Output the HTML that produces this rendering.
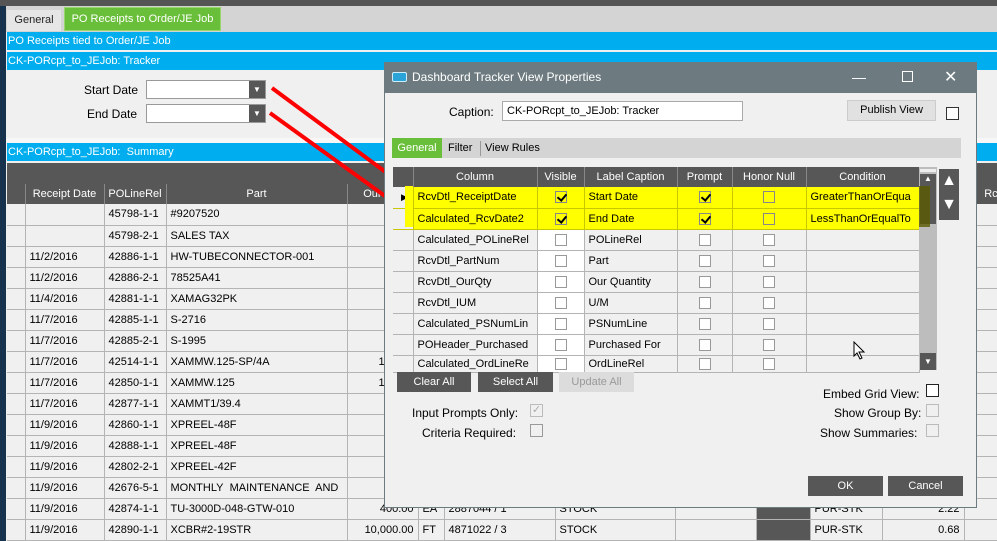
<!DOCTYPE html>
<html><head><meta charset="utf-8"><style>
*{margin:0;padding:0;box-sizing:border-box}
body{width:997px;height:541px;overflow:hidden;background:#f0f0f0;font-family:"Liberation Sans",Arial,sans-serif;font-size:11px;color:#000;position:relative}
.a{position:absolute}
.bar{position:absolute;left:7px;right:0;height:18px;background:#00aeef;color:#fff;font-size:11px;line-height:18px;padding-left:1px}
.bg td{border-right:1px solid #b4b4b4;border-bottom:1px solid #b4b4b4;height:21px;padding:0 4px;white-space:nowrap;overflow:hidden;font-size:11px}
table{border-collapse:collapse;table-layout:fixed}
.dg td{border-right:1px solid #b4b4b4;border-bottom:1px solid #b4b4b4;height:21px;padding:0 4px;white-space:nowrap;overflow:hidden;font-size:11px;background:#f0f0f0}
.dg td.w{background:#fff}
.dg tr.y td{background:#ffff00;border-color:#c8c800}
.dg tr.y td.s{background:#f0f0f0}
.dg th,.bg th{background:#575757;color:#fff;font-weight:normal;border-right:1px solid #888;height:20px;font-size:11px}
.cb{display:inline-block;width:12px;height:12px;border:1px solid #999;background:#fff;vertical-align:middle;position:relative}
.y .cb{background:#ffff00;border-color:#888}
.ck::after{content:"";position:absolute;left:3px;top:0px;width:4px;height:7px;border:solid #000;border-width:0 2px 2px 0;transform:rotate(40deg)}
.c{text-align:center}
.btn{position:absolute;background:#575757;color:#fff;text-align:center;line-height:20px;height:20px}
</style></head><body>
<div class="a" style="left:0;top:0;width:997px;height:6px;background:#555"></div>
<div class="a" style="left:0;top:6px;width:6px;height:535px;background:#16324d"></div>
<div class="a" style="left:6px;top:6px;width:991px;height:26px;background:#d4d4d4"></div>
<div class="a" style="left:7px;top:10px;width:54px;height:21px;line-height:21px;text-align:center;background:#e6e6e6;color:#222">General</div>
<div class="a" style="left:64px;top:7px;width:157px;height:24px;line-height:22px;text-align:center;background:#6abf3a;color:#fff;border:1px solid #9ad66e">PO Receipts to Order/JE Job</div>
<div class="bar" style="top:32px">PO Receipts tied to Order/JE Job</div>
<div class="bar" style="top:52px">CK-PORcpt_to_JEJob: Tracker</div>
<div class="a" style="left:84px;top:83px;font-size:12px">Start Date</div>
<div class="a" style="left:87px;top:107px;font-size:12px">End Date</div>
<div class="a" style="left:146px;top:80px;width:120px;height:19px;background:#fff;border:1px solid #999"></div>
<div class="a" style="left:249px;top:81px;width:16px;height:17px;background:#575757;color:#fff;font-size:8px;text-align:center;line-height:17px">▼</div>
<div class="a" style="left:146px;top:104px;width:120px;height:19px;background:#fff;border:1px solid #999"></div>
<div class="a" style="left:249px;top:105px;width:16px;height:17px;background:#575757;color:#fff;font-size:8px;text-align:center;line-height:17px">▼</div>
<div class="a" style="left:6px;top:138px;width:991px;height:5px;background:#f7f7f7"></div>
<div class="bar" style="top:143px">CK-PORcpt_to_JEJob:&nbsp; Summary</div>
<div class="a" style="left:7px;top:163px;width:990px;height:21px;background:#575757"></div>
<table class="bg a" style="left:7px;top:184px;width:1000px">
<colgroup><col style="width:18px"><col style="width:79px"><col style="width:62px"><col style="width:181px"><col style="width:71px"><col style="width:26px"><col style="width:111px"><col style="width:120px"><col style="width:81px"><col style="width:54px"><col style="width:72px"><col style="width:82px"><col style="width:63px"></colgroup>
<tr><th></th><th>Receipt Date</th><th>POLineRel</th><th>Part</th><th>Our Qty</th><th>U/M</th><th>PS</th><th></th><th></th><th></th><th></th><th></th><th>Rcpt</th></tr>
<tr><td></td><td></td><td>45798-1-1</td><td>#9207520</td><td></td><td></td><td></td><td></td><td></td><td style="background:#575757"></td><td></td><td></td><td></td></tr>
<tr><td></td><td></td><td>45798-2-1</td><td>SALES TAX</td><td></td><td></td><td></td><td></td><td></td><td style="background:#575757"></td><td></td><td></td><td></td></tr>
<tr><td></td><td>11/2/2016</td><td>42886-1-1</td><td>HW-TUBECONNECTOR-001</td><td></td><td></td><td></td><td></td><td></td><td style="background:#575757"></td><td></td><td></td><td></td></tr>
<tr><td></td><td>11/2/2016</td><td>42886-2-1</td><td>78525A41</td><td></td><td></td><td></td><td></td><td></td><td style="background:#575757"></td><td></td><td></td><td></td></tr>
<tr><td></td><td>11/4/2016</td><td>42881-1-1</td><td>XAMAG32PK</td><td></td><td></td><td></td><td></td><td></td><td style="background:#575757"></td><td></td><td></td><td></td></tr>
<tr><td></td><td>11/7/2016</td><td>42885-1-1</td><td>S-2716</td><td></td><td></td><td></td><td></td><td></td><td style="background:#575757"></td><td></td><td></td><td></td></tr>
<tr><td></td><td>11/7/2016</td><td>42885-2-1</td><td>S-1995</td><td></td><td></td><td></td><td></td><td></td><td style="background:#575757"></td><td></td><td></td><td></td></tr>
<tr><td></td><td>11/7/2016</td><td>42514-1-1</td><td>XAMMW.125-SP/4A</td><td style="text-align:right;padding-left:31px">1,000.00</td><td></td><td></td><td></td><td></td><td style="background:#575757"></td><td></td><td></td><td></td></tr>
<tr><td></td><td>11/7/2016</td><td>42850-1-1</td><td>XAMMW.125</td><td style="text-align:right;padding-left:31px">1,600.00</td><td></td><td></td><td></td><td></td><td style="background:#575757"></td><td></td><td></td><td></td></tr>
<tr><td></td><td>11/7/2016</td><td>42877-1-1</td><td>XAMMT1/39.4</td><td></td><td></td><td></td><td></td><td></td><td style="background:#575757"></td><td></td><td></td><td></td></tr>
<tr><td></td><td>11/9/2016</td><td>42860-1-1</td><td>XPREEL-48F</td><td></td><td></td><td></td><td></td><td></td><td style="background:#575757"></td><td></td><td></td><td></td></tr>
<tr><td></td><td>11/9/2016</td><td>42888-1-1</td><td>XPREEL-48F</td><td></td><td></td><td></td><td></td><td></td><td style="background:#575757"></td><td></td><td></td><td></td></tr>
<tr><td></td><td>11/9/2016</td><td>42802-2-1</td><td>XPREEL-42F</td><td></td><td></td><td></td><td></td><td></td><td style="background:#575757"></td><td></td><td></td><td></td></tr>
<tr><td></td><td>11/9/2016</td><td>42676-5-1</td><td>MONTHLY&nbsp; MAINTENANCE&nbsp; AND</td><td></td><td></td><td></td><td></td><td></td><td style="background:#575757"></td><td></td><td></td><td></td></tr>
<tr><td></td><td>11/9/2016</td><td>42874-1-1</td><td>TU-3000D-048-GTW-010</td><td style="text-align:right">400.00</td><td>EA</td><td>2887044 / 1</td><td>STOCK</td><td></td><td style="background:#575757"></td><td>PUR-STK</td><td style="text-align:right">2.22</td><td></td></tr>
<tr><td></td><td>11/9/2016</td><td>42890-1-1</td><td>XCBR#2-19STR</td><td style="text-align:right">10,000.00</td><td>FT</td><td>4871022 / 3</td><td>STOCK</td><td></td><td style="background:#575757"></td><td>PUR-STK</td><td style="text-align:right">0.68</td><td></td></tr>
</table>
<svg class="a" style="left:0;top:0" width="997" height="541"><line x1="272" y1="88" x2="418" y2="196" stroke="#f00" stroke-width="4"/><line x1="270" y1="113" x2="414" y2="217" stroke="#f00" stroke-width="4"/></svg>
<div class="a" style="left:384px;top:62px;width:593px;height:446px;background:#f0f0f0;border:1px solid #6d7b80">
<div class="a" style="left:0;top:0;width:591px;height:30px;background:#6d7b80;color:#fff;font-size:12px;line-height:29px;padding-left:27px">Dashboard Tracker View Properties</div>
<div class="a" style="left:7px;top:9px;width:15px;height:10px;background:#2aa3d8;border:1px solid #cfeefc;border-radius:2px"></div>
<div class="a" style="left:467px;top:6px;color:#fff;font-size:14px">—</div>
<div class="a" style="left:517px;top:8px;width:11px;height:11px;border:1px solid #fff"></div>
<div class="a" style="left:559px;top:4px;color:#fff;font-size:16px">✕</div>
<div class="a" style="left:64px;top:42px;font-size:12px">Caption:</div>
<div class="a" style="left:117px;top:38px;width:241px;height:20px;background:#fff;border:1px solid #aaa;padding:3px 4px">CK-PORcpt_to_JEJob: Tracker</div>
<div class="a" style="left:462px;top:37px;width:89px;height:21px;background:#e1e1e1;border:1px solid #ccc;text-align:center;line-height:19px">Publish View</div>
<div class="a" style="left:561px;top:44px;width:13px;height:13px;border:1px solid #333;background:#fff"></div>
<div class="a" style="left:7px;top:75px;width:569px;height:20px;background:#d4d4d4"></div>
<div class="a" style="left:7px;top:75px;width:50px;height:20px;background:#6abf3a;color:#fff;line-height:20px;text-align:center">General</div>
<div class="a" style="left:63px;top:75px;line-height:20px">Filter</div>
<div class="a" style="left:95px;top:78px;width:1px;height:15px;background:#999"></div>
<div class="a" style="left:100px;top:75px;line-height:20px">View Rules</div>
<table class="dg a" style="left:8px;top:104px;width:526px">
<colgroup><col style="width:20px"><col style="width:124px"><col style="width:47px"><col style="width:93px"><col style="width:55px"><col style="width:74px"><col style="width:113px"></colgroup>
<tr><th></th><th>Column</th><th>Visible</th><th>Label Caption</th><th>Prompt</th><th>Honor Null</th><th>Condition</th></tr>
<tr class="y"><td class="s" style="font-size:9px;padding:0 0 0 8px">▶</td><td>RcvDtl_ReceiptDate</td><td class="c"><span class="cb ck"></span></td><td>Start Date</td><td class="c"><span class="cb ck"></span></td><td class="c"><span class="cb"></span></td><td>GreaterThanOrEqua</td></tr>
<tr class="y"><td class="s"></td><td>Calculated_RcvDate2</td><td class="c"><span class="cb ck"></span></td><td>End Date</td><td class="c"><span class="cb ck"></span></td><td class="c"><span class="cb"></span></td><td>LessThanOrEqualTo</td></tr>
<tr><td></td><td>Calculated_POLineRel</td><td class="c w"><span class="cb"></span></td><td>POLineRel</td><td class="c"><span class="cb"></span></td><td class="c"><span class="cb"></span></td><td></td></tr>
<tr><td></td><td>RcvDtl_PartNum</td><td class="c w"><span class="cb"></span></td><td>Part</td><td class="c"><span class="cb"></span></td><td class="c"><span class="cb"></span></td><td></td></tr>
<tr><td></td><td>RcvDtl_OurQty</td><td class="c w"><span class="cb"></span></td><td>Our Quantity</td><td class="c"><span class="cb"></span></td><td class="c"><span class="cb"></span></td><td></td></tr>
<tr><td></td><td>RcvDtl_IUM</td><td class="c w"><span class="cb"></span></td><td>U/M</td><td class="c"><span class="cb"></span></td><td class="c"><span class="cb"></span></td><td></td></tr>
<tr><td></td><td>Calculated_PSNumLin</td><td class="c w"><span class="cb"></span></td><td>PSNumLine</td><td class="c"><span class="cb"></span></td><td class="c"><span class="cb"></span></td><td></td></tr>
<tr><td></td><td>POHeader_Purchased</td><td class="c w"><span class="cb"></span></td><td>Purchased For</td><td class="c"><span class="cb"></span></td><td class="c"><span class="cb"></span></td><td></td></tr>
<tr><td style="height:17px"></td><td style="height:17px">Calculated_OrdLineRe</td><td class="c w" style="height:17px"><span class="cb"></span></td><td style="height:17px">OrdLineRel</td><td class="c" style="height:17px"><span class="cb"></span></td><td class="c" style="height:17px"><span class="cb"></span></td><td style="height:17px"></td></tr>
</table>
<div class="a" style="left:534px;top:104px;width:18px;height:203px;background:#bdbdbd"></div>
<div class="a" style="left:535px;top:106px;width:16px;height:3px;background:#eee"></div>
<div class="a" style="left:535px;top:111px;width:16px;height:50px;background:#575757;color:#fff;font-size:8px;text-align:center">▲</div>
<div class="a" style="left:535px;top:290px;width:16px;height:17px;background:#575757;color:#fff;font-size:8px;text-align:center;line-height:17px">▼</div>
<div class="a" style="left:20px;top:123px;width:8px;height:41px;background:#ffff00"></div>
<div class="a" style="left:534px;top:123px;width:11px;height:41px;background:#5a5a00;opacity:0.8"></div>
<div class="a" style="left:554px;top:106px;width:20px;height:51px;background:#575757;color:#fff;font-size:16px;text-align:center;line-height:24px">▲<br>▼</div>
<div class="btn" style="left:12px;top:309px;width:74px">Clear All</div>
<div class="btn" style="left:93px;top:309px;width:75px">Select All</div>
<div class="btn" style="left:174px;top:309px;width:75px;background:#dcdcdc;color:#999">Update All</div>
<div class="a" style="left:438px;top:324px;font-size:12px">Embed Grid View:</div>
<div class="a" style="left:541px;top:321px;width:13px;height:13px;border:1px solid #222;background:#fff"></div>
<div class="a" style="left:449px;top:343px;font-size:12px">Show Group By:</div>
<div class="a" style="left:541px;top:341px;width:13px;height:13px;border:1px solid #bbb"></div>
<div class="a" style="left:435px;top:363px;font-size:12px">Show Summaries:</div>
<div class="a" style="left:541px;top:361px;width:13px;height:13px;border:1px solid #bbb"></div>
<div class="a" style="left:27px;top:343px;font-size:12px">Input Prompts Only:</div>
<div class="a" style="left:145px;top:341px;width:13px;height:13px;border:1px solid #bbb;color:#aaa;font-size:11px;line-height:11px;text-align:center">✓</div>
<div class="a" style="left:37px;top:363px;font-size:12px">Criteria Required:</div>
<div class="a" style="left:145px;top:361px;width:13px;height:13px;border:1px solid #999"></div>
<div class="btn" style="left:423px;top:413px;width:75px">OK</div>
<div class="btn" style="left:503px;top:413px;width:75px">Cancel</div>
</div>
<svg class="a" style="left:853px;top:341px" width="14" height="20"><path d="M1 1 L1 15 L4 12 L7 18 L9 17 L6 11 L11 11 Z" fill="#fff" stroke="#000" stroke-width="1"/></svg>
</body></html>
